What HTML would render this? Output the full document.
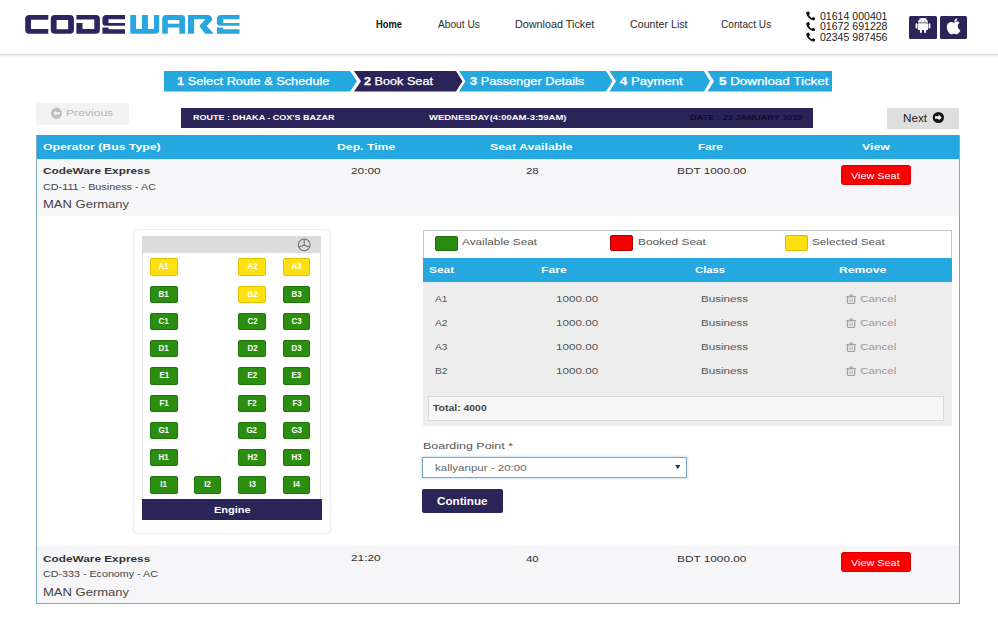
<!DOCTYPE html>
<html><head><meta charset="utf-8">
<style>
html,body{margin:0;padding:0;width:998px;height:639px;overflow:hidden;background:#fff;}
body{position:relative;font-family:"Liberation Sans",sans-serif;}
.t{position:absolute;white-space:nowrap;line-height:1;transform-origin:0 0;}
.r{position:absolute;}
.seat{position:absolute;width:27.5px;height:17.3px;box-sizing:border-box;border:1px solid;border-radius:2px;color:#fff;font-weight:bold;font-size:8.6px;line-height:14.6px;text-align:center;}
.seat span{display:inline-block;transform:scaleX(.92);}
svg{position:absolute;}
</style></head><body>
<div class="r" style="left:0px;top:53.5px;width:998px;height:1.5px;background:#d4d4d4;"></div>
<div class="r" style="left:0px;top:55px;width:998px;height:3px;background:linear-gradient(#ececec,#ffffff);"></div>
<svg style="left:0;top:0" width="260" height="50"><path fill="#2c2560" fill-rule="evenodd" d="M48.3,15 H29.2 Q25.2,15 25.2,19 V29.8 Q25.2,33.8 29.2,33.8 H48.3 V29.1 H31 V19.7 H48.3 Z M54.8,15 H69.9 Q73.9,15 73.9,19 V29.8 Q73.9,33.8 69.9,33.8 H54.8 Q50.8,33.8 50.8,29.8 V19 Q50.8,15 54.8,15 Z M56.6,19.9 V29.3 H68.1 V19.9 Z M76.4,15 H95.9 Q99.9,15 99.9,19 V29.8 Q99.9,33.8 95.9,33.8 H76.4 V22.9 H82.5 V29.1 H94.3 V19.5 H76.4 Z M125,15 H106.4 Q102.4,15 102.4,19 V22.7 Q102.4,25.7 105.4,25.7 H125 V22.9 H108.5 V19.3 H125 Z M102.4,27.4 H108.5 V29.3 H125 V33.8 H102.4 Z"/><path fill="#2aa6df" fill-rule="evenodd" d="M130.3,15 H136.1 V29.1 H141.9 V15 H147.9 V29.1 H153.9 V15 H159.2 V29.8 Q159.2,33.8 155.2,33.8 H130.3 Z M162.2,33.8 V19 Q162.2,15 166.2,15 H181.6 Q185.1,15 185.1,18.5 V33.8 H179.3 V27.4 H167.8 V33.8 Z M167.8,19.9 V23.8 H179.3 V19.9 Z M188,33.8 V15 H207.3 Q212.3,15 212.3,20 L206.6,25.9 L213.8,33.8 H205 L199.3,25.7 L205.6,19.3 H194.1 V33.8 Z M239.5,15 H220.9 Q216.9,15 216.9,19 V22.7 Q216.9,25.7 219.9,25.7 H239.5 V22.9 H223.0 V19.3 H239.5 Z M216.9,27.4 H223.0 V29.3 H239.5 V33.8 H216.9 Z"/></svg>
<div class="t" style="left:376.46px;top:19.79px;font-size:10.36px;color:#111;font-weight:bold;transform:scaleX(0.903);">Home</div>
<div class="t" style="left:437.69px;top:19.79px;font-size:10.36px;color:#2b2b2b;transform:scaleX(0.982);">About Us</div>
<div class="t" style="left:515.38px;top:19.79px;font-size:10.36px;color:#2b2b2b;transform:scaleX(1.043);">Download Ticket</div>
<div class="t" style="left:629.69px;top:19.79px;font-size:10.36px;color:#2b2b2b;transform:scaleX(1.031);">Counter List</div>
<div class="t" style="left:721.38px;top:19.79px;font-size:10.36px;color:#2b2b2b;transform:scaleX(0.980);">Contact Us</div>
<div class="t" style="left:819.50px;top:10.67px;font-size:10.51px;color:#222;transform:scaleX(1.005);">01614 000401</div>
<div class="t" style="left:819.50px;top:21.47px;font-size:10.51px;color:#222;transform:scaleX(1.005);">01672 691228</div>
<div class="t" style="left:819.50px;top:31.97px;font-size:10.51px;color:#222;transform:scaleX(1.005);">02345 987456</div>
<svg style="left:0;top:0" width="998" height="50"><path transform="translate(806,11.2)" d="M1.2,0.6 L3,0.2 L4,2.6 L2.9,3.6 C3.5,5 4.6,6.2 6,6.9 L7,5.8 L9.2,6.8 L8.8,8.6 C8.4,9.2 7.6,9.3 6.8,9.1 C3.6,8.2 1.2,5.6 0.3,2.6 C0.1,1.8 0.4,1 1.2,0.6 Z" fill="#111"/><path transform="translate(806,21.9)" d="M1.2,0.6 L3,0.2 L4,2.6 L2.9,3.6 C3.5,5 4.6,6.2 6,6.9 L7,5.8 L9.2,6.8 L8.8,8.6 C8.4,9.2 7.6,9.3 6.8,9.1 C3.6,8.2 1.2,5.6 0.3,2.6 C0.1,1.8 0.4,1 1.2,0.6 Z" fill="#111"/><path transform="translate(806,32.4)" d="M1.2,0.6 L3,0.2 L4,2.6 L2.9,3.6 C3.5,5 4.6,6.2 6,6.9 L7,5.8 L9.2,6.8 L8.8,8.6 C8.4,9.2 7.6,9.3 6.8,9.1 C3.6,8.2 1.2,5.6 0.3,2.6 C0.1,1.8 0.4,1 1.2,0.6 Z" fill="#111"/></svg>
<div class="r" style="left:909px;top:16px;width:28px;height:22.5px;background:#2b2459;border-radius:1.5px;"></div>
<div class="r" style="left:940px;top:16px;width:27px;height:22.5px;background:#2b2459;border-radius:1.5px;"></div>
<svg style="left:0;top:0" width="998" height="50"><g fill="#fff">
<path d="M917.9,22.5 A5.1,4.4 0 0 1 928.1,22.5 Z"/>
<rect x="917.9" y="23.2" width="10.2" height="6.7" rx="0.9"/>
<rect x="915.6" y="23.2" width="1.8" height="5.4" rx="0.9"/>
<rect x="928.6" y="23.2" width="1.8" height="5.4" rx="0.9"/>
<rect x="919.9" y="29" width="2" height="3.9" rx="1"/>
<rect x="924.1" y="29" width="2" height="3.9" rx="1"/>
<line x1="919.6" y1="17.6" x2="920.7" y2="19.2" stroke="#fff" stroke-width="0.6"/>
<line x1="926.4" y1="17.6" x2="925.3" y2="19.2" stroke="#fff" stroke-width="0.6"/>
</g><circle cx="921.1" cy="20.9" r="0.5" fill="#2b2459"/><circle cx="924.9" cy="20.9" r="0.5" fill="#2b2459"/><g fill="#fff" transform="translate(954.2,26.6) scale(1.13) translate(-954.2,-26)">
<path d="M954.2,22.6 C952.6,21.6 950.6,21.7 949.4,22.6 C947.6,23.9 947.2,26.4 948.1,28.7 C948.9,30.8 950.3,32.8 951.7,32.8 C952.6,32.8 953,32.3 954,32.3 C955,32.3 955.4,32.8 956.3,32.8 C957.7,32.8 959,30.9 959.7,29.2 C958.2,28.5 957.4,27.1 957.4,25.6 C957.4,24.3 958.1,23.3 959.1,22.7 C958.1,21.5 956.6,21.4 955.6,21.8 C955,22 954.6,22.4 954.2,22.6 Z"/>
<path d="M954.3,21.7 C954.1,20.1 955.3,18.7 956.9,18.5 C957.1,20.1 955.8,21.6 954.3,21.7 Z"/>
</g></svg>
<svg style="left:0;top:0" width="998" height="100">
<polygon fill="#25a8e0" points="164,71 350,71 357,81.25 350,91.5 164,91.5"/>
<polygon fill="#2b2459" points="354,71 456,71 462.5,81.25 456,91.5 354,91.5 361,81.25"/>
<polygon fill="#25a8e0" points="459,71 606,71 612.5,81.25 606,91.5 459,91.5 465.5,81.25"/>
<polygon fill="#25a8e0" points="609.5,71 704,71 710,81.25 704,91.5 609.5,91.5 616,81.25"/>
<polygon fill="#25a8e0" points="707.5,71 832,71 832,91.5 707.5,91.5 714,81.25"/>
</svg>
<div class="t" style="left:177.42px;top:76.74px;font-size:10.07px;color:#fff;transform:scaleX(1.267);-webkit-text-stroke:0.25px #fff;"><b>1</b> Select Route &amp; Schedule</div>
<div class="t" style="left:364.46px;top:76.74px;font-size:10.07px;color:#fff;transform:scaleX(1.257);-webkit-text-stroke:0.25px #fff;"><b>2</b> Book Seat</div>
<div class="t" style="left:470.00px;top:76.74px;font-size:10.07px;color:#fff;transform:scaleX(1.268);-webkit-text-stroke:0.25px #fff;"><b>3</b> Passenger Details</div>
<div class="t" style="left:620.31px;top:76.74px;font-size:10.07px;color:#fff;transform:scaleX(1.304);-webkit-text-stroke:0.25px #fff;"><b>4</b> Payment</div>
<div class="t" style="left:718.62px;top:76.74px;font-size:10.07px;color:#fff;transform:scaleX(1.331);-webkit-text-stroke:0.25px #fff;"><b>5</b> Download Ticket</div>
<div class="r" style="left:36px;top:102.5px;width:93px;height:22.5px;background:#f3f3f3;"></div>
<svg style="left:0;top:0" width="140" height="140"><circle cx="56.5" cy="113.3" r="5.5" fill="#bdbdbd"/>
<path d="M53.2,113.3 L56.2,110.6 V112.2 H59.8 V114.4 H56.2 V116 Z" fill="#f3f3f3"/></svg>
<div class="t" style="left:65.76px;top:108.01px;font-size:9.64px;color:#b5b5b5;transform:scaleX(1.260);">Previous</div>
<div class="r" style="left:181px;top:108px;width:632px;height:19.5px;background:#2b2459;"></div>
<div class="t" style="left:193.38px;top:113.78px;font-size:7.90px;color:#fff;font-weight:bold;transform:scaleX(1.143);">ROUTE : DHAKA - COX'S BAZAR</div>
<div class="t" style="left:429.08px;top:113.78px;font-size:7.90px;color:#fff;font-weight:bold;transform:scaleX(1.200);">WEDNESDAY(4:00AM-3:59AM)</div>
<div class="t" style="left:689.80px;top:113.68px;font-size:7.90px;color:#110d28;font-weight:bold;transform:scaleX(1.170);">DATE : 23 JANUARY 2019</div>
<div class="r" style="left:887px;top:108px;width:72px;height:20.5px;background:#dedede;"></div>
<div class="t" style="left:903.46px;top:114.14px;font-size:10.36px;color:#222;transform:scaleX(1.130);">Next</div>
<svg style="left:880px;top:100px" width="80" height="40"><circle cx="58.4" cy="17.5" r="5.6" fill="#111"/>
<path d="M61.8,17.5 L58.6,14.6 V16.3 H55 V18.7 H58.6 V20.4 Z" fill="#fff"/></svg>
<div class="r" style="left:36px;top:134.5px;width:924px;height:469.5px;background:#fff;box-sizing:border-box;border:1px solid #80abbd;"></div>
<div class="r" style="left:37px;top:134.5px;width:922px;height:24.0px;background:#25a8e0;"></div>
<div class="r" style="left:37px;top:158.5px;width:922px;height:57.099999999999994px;background:#f6f6f8;"></div>
<div class="r" style="left:37px;top:546.3px;width:922px;height:56.700000000000045px;background:#f6f6f8;"></div>
<div class="t" style="left:43.00px;top:142.46px;font-size:9.93px;color:#fff;font-weight:bold;transform:scaleX(1.236);">Operator (Bus Type)</div>
<div class="t" style="left:337.00px;top:142.46px;font-size:9.93px;color:#fff;font-weight:bold;transform:scaleX(1.233);">Dep. Time</div>
<div class="t" style="left:490.38px;top:142.46px;font-size:9.93px;color:#fff;font-weight:bold;transform:scaleX(1.240);">Seat Available</div>
<div class="t" style="left:697.69px;top:142.46px;font-size:9.93px;color:#fff;font-weight:bold;transform:scaleX(1.182);">Fare</div>
<div class="t" style="left:862.23px;top:142.46px;font-size:9.93px;color:#fff;font-weight:bold;transform:scaleX(1.240);">View</div>
<div class="t" style="left:43.00px;top:166.01px;font-size:9.64px;color:#333;font-weight:bold;transform:scaleX(1.227);">CodeWare Express</div>
<div class="t" style="left:43.00px;top:183.39px;font-size:8.77px;color:#444;transform:scaleX(1.231);">CD-111 - Business - AC</div>
<div class="t" style="left:43.00px;top:200.19px;font-size:10.07px;color:#444;transform:scaleX(1.293);">MAN Germany</div>
<div class="t" style="left:351.00px;top:165.51px;font-size:9.64px;color:#333;transform:scaleX(1.234);">20:00</div>
<div class="t" style="left:526.23px;top:166.11px;font-size:9.64px;color:#333;transform:scaleX(1.184);">28</div>
<div class="t" style="left:676.62px;top:166.11px;font-size:9.64px;color:#333;transform:scaleX(1.228);">BDT 1000.00</div>
<div class="r" style="left:841.2px;top:164.5px;width:69.5px;height:20.400000000000006px;background:#fa0000;border-radius:2.5px;box-sizing:border-box;border:1px solid #dc0000;"></div>
<div class="t" style="left:851.00px;top:170.51px;font-size:9.64px;color:#fff;transform:scaleX(1.127);">View Seat</div>
<div class="t" style="left:43.00px;top:553.81px;font-size:9.64px;color:#333;font-weight:bold;transform:scaleX(1.227);">CodeWare Express</div>
<div class="t" style="left:43.00px;top:570.39px;font-size:8.77px;color:#444;transform:scaleX(1.222);">CD-333 - Economy - AC</div>
<div class="t" style="left:43.00px;top:587.99px;font-size:10.07px;color:#444;transform:scaleX(1.293);">MAN Germany</div>
<div class="t" style="left:351.00px;top:553.31px;font-size:9.64px;color:#333;transform:scaleX(1.234);">21:20</div>
<div class="t" style="left:526.23px;top:553.91px;font-size:9.64px;color:#333;transform:scaleX(1.184);">40</div>
<div class="t" style="left:676.62px;top:553.91px;font-size:9.64px;color:#333;transform:scaleX(1.228);">BDT 1000.00</div>
<div class="r" style="left:841.2px;top:551.9px;width:69.5px;height:20.399999999999977px;background:#fa0000;border-radius:2.5px;box-sizing:border-box;border:1px solid #dc0000;"></div>
<div class="t" style="left:851.00px;top:557.91px;font-size:9.64px;color:#fff;transform:scaleX(1.127);">View Seat</div>
<div class="r" style="left:133.7px;top:229.5px;width:196.0px;height:303.5px;background:#fff;border-radius:4px;box-shadow:0 0 2px rgba(0,0,0,.25);"></div>
<div class="r" style="left:142.4px;top:236px;width:179.1px;height:17px;background:#dcdcdc;"></div>
<div class="r" style="left:142.4px;top:253px;width:179.1px;height:246.39999999999998px;background:#fff;box-sizing:border-box;border-left:1px solid #e2e2e2;border-right:1px solid #e2e2e2;"></div>
<svg style="left:290px;top:230px" width="30" height="30"><g fill="none" stroke="#6e6e6e" stroke-width="1.05"><circle cx="14.2" cy="14.8" r="5.9"/>
<path d="M8.6,17 L14.2,15.2 L19.8,17"/><path d="M14.2,9 V15.2"/></g></svg>
<div class="r" style="left:142.3px;top:499.4px;width:179.7px;height:20.399999999999977px;background:#2b2459;"></div>
<div class="t" style="left:214.00px;top:504.51px;font-size:9.64px;color:#fff;font-weight:bold;transform:scaleX(1.143);">Engine</div>
<div class="seat" style="left:150.2px;top:258.30px;background:#ffe010;border-color:#e0c200"><span>A1</span></div>
<div class="seat" style="left:238.4px;top:258.30px;background:#ffe010;border-color:#e0c200"><span>A2</span></div>
<div class="seat" style="left:282.9px;top:258.30px;background:#ffe010;border-color:#e0c200"><span>A3</span></div>
<div class="seat" style="left:150.2px;top:285.55px;background:#2c8e11;border-color:#207409"><span>B1</span></div>
<div class="seat" style="left:238.4px;top:285.55px;background:#ffe010;border-color:#e0c200"><span>B2</span></div>
<div class="seat" style="left:282.9px;top:285.55px;background:#2c8e11;border-color:#207409"><span>B3</span></div>
<div class="seat" style="left:150.2px;top:312.80px;background:#2c8e11;border-color:#207409"><span>C1</span></div>
<div class="seat" style="left:238.4px;top:312.80px;background:#2c8e11;border-color:#207409"><span>C2</span></div>
<div class="seat" style="left:282.9px;top:312.80px;background:#2c8e11;border-color:#207409"><span>C3</span></div>
<div class="seat" style="left:150.2px;top:340.05px;background:#2c8e11;border-color:#207409"><span>D1</span></div>
<div class="seat" style="left:238.4px;top:340.05px;background:#2c8e11;border-color:#207409"><span>D2</span></div>
<div class="seat" style="left:282.9px;top:340.05px;background:#2c8e11;border-color:#207409"><span>D3</span></div>
<div class="seat" style="left:150.2px;top:367.30px;background:#2c8e11;border-color:#207409"><span>E1</span></div>
<div class="seat" style="left:238.4px;top:367.30px;background:#2c8e11;border-color:#207409"><span>E2</span></div>
<div class="seat" style="left:282.9px;top:367.30px;background:#2c8e11;border-color:#207409"><span>E3</span></div>
<div class="seat" style="left:150.2px;top:394.55px;background:#2c8e11;border-color:#207409"><span>F1</span></div>
<div class="seat" style="left:238.4px;top:394.55px;background:#2c8e11;border-color:#207409"><span>F2</span></div>
<div class="seat" style="left:282.9px;top:394.55px;background:#2c8e11;border-color:#207409"><span>F3</span></div>
<div class="seat" style="left:150.2px;top:421.80px;background:#2c8e11;border-color:#207409"><span>G1</span></div>
<div class="seat" style="left:238.4px;top:421.80px;background:#2c8e11;border-color:#207409"><span>G2</span></div>
<div class="seat" style="left:282.9px;top:421.80px;background:#2c8e11;border-color:#207409"><span>G3</span></div>
<div class="seat" style="left:150.2px;top:449.05px;background:#2c8e11;border-color:#207409"><span>H1</span></div>
<div class="seat" style="left:238.4px;top:449.05px;background:#2c8e11;border-color:#207409"><span>H2</span></div>
<div class="seat" style="left:282.9px;top:449.05px;background:#2c8e11;border-color:#207409"><span>H3</span></div>
<div class="seat" style="left:150.2px;top:476.30px;background:#2c8e11;border-color:#207409"><span>I1</span></div>
<div class="seat" style="left:193.8px;top:476.30px;background:#2c8e11;border-color:#207409"><span>I2</span></div>
<div class="seat" style="left:238.4px;top:476.30px;background:#2c8e11;border-color:#207409"><span>I3</span></div>
<div class="seat" style="left:282.9px;top:476.30px;background:#2c8e11;border-color:#207409"><span>I4</span></div>
<div class="r" style="left:422.5px;top:229.5px;width:529.0px;height:196.5px;background:#fff;box-sizing:border-box;border:1px solid #c4c9c9;border-bottom:none;"></div>
<div class="r" style="left:422.5px;top:258px;width:529.0px;height:23.600000000000023px;background:#25a8e0;"></div>
<div class="r" style="left:422.5px;top:281.6px;width:529.0px;height:144.39999999999998px;background:#ededed;"></div>
<div class="r" style="left:435px;top:235.5px;width:23px;height:15.0px;background:#2a8a0f;border-radius:2px;box-sizing:border-box;border:1px solid #1f6f0a;"></div>
<div class="t" style="left:462.46px;top:237.01px;font-size:9.64px;color:#555;transform:scaleX(1.223);">Available Seat</div>
<div class="r" style="left:610px;top:235.2px;width:23px;height:15.400000000000006px;background:#f40000;border-radius:2px;box-sizing:border-box;border:1px solid #b00000;"></div>
<div class="t" style="left:637.69px;top:237.01px;font-size:9.64px;color:#555;transform:scaleX(1.231);">Booked Seat</div>
<div class="r" style="left:784.6px;top:235.2px;width:23.399999999999977px;height:15.400000000000006px;background:#ffe010;border-radius:2px;box-sizing:border-box;border:1px solid #d8b800;"></div>
<div class="t" style="left:811.77px;top:237.01px;font-size:9.64px;color:#555;transform:scaleX(1.215);">Selected Seat</div>
<div class="t" style="left:428.54px;top:265.48px;font-size:9.78px;color:#fff;font-weight:bold;transform:scaleX(1.218);">Seat</div>
<div class="t" style="left:540.62px;top:265.48px;font-size:9.78px;color:#fff;font-weight:bold;transform:scaleX(1.245);">Fare</div>
<div class="t" style="left:694.54px;top:265.48px;font-size:9.78px;color:#fff;font-weight:bold;transform:scaleX(1.155);">Class</div>
<div class="t" style="left:838.62px;top:265.48px;font-size:9.78px;color:#fff;font-weight:bold;transform:scaleX(1.246);">Remove</div>
<div class="t" style="left:435.00px;top:294.46px;font-size:9.93px;color:#555;transform:scaleX(1.029);">A1</div>
<div class="t" style="left:556.23px;top:294.46px;font-size:9.93px;color:#555;transform:scaleX(1.175);">1000.00</div>
<div class="t" style="left:700.54px;top:294.46px;font-size:9.93px;color:#555;transform:scaleX(1.170);">Business</div>
<div class="t" style="left:859.62px;top:294.46px;font-size:9.93px;color:#999;transform:scaleX(1.180);">Cancel</div>
<svg style="left:845px;top:294.00px" width="13" height="12"><g fill="none" stroke="#9c9c9c">
<path d="M4.4,2.3 Q4.4,0.7 6.1,0.7 Q7.8,0.7 7.8,2.3" stroke-width="1.1"/><path d="M1.4,2.7 H10.8" stroke-width="1.3"/>
<path d="M2.5,3.4 V8.4 Q2.5,9.5 3.6,9.5 H8.6 Q9.7,9.5 9.7,8.4 V3.4" stroke-width="1.2"/>
<path d="M5,4.6 V8 M7.2,4.6 V8" stroke-width="0.9"/></g></svg>
<div class="t" style="left:435.00px;top:318.36px;font-size:9.93px;color:#555;transform:scaleX(1.029);">A2</div>
<div class="t" style="left:556.23px;top:318.36px;font-size:9.93px;color:#555;transform:scaleX(1.175);">1000.00</div>
<div class="t" style="left:700.54px;top:318.36px;font-size:9.93px;color:#555;transform:scaleX(1.170);">Business</div>
<div class="t" style="left:859.62px;top:318.36px;font-size:9.93px;color:#999;transform:scaleX(1.180);">Cancel</div>
<svg style="left:845px;top:317.90px" width="13" height="12"><g fill="none" stroke="#9c9c9c">
<path d="M4.4,2.3 Q4.4,0.7 6.1,0.7 Q7.8,0.7 7.8,2.3" stroke-width="1.1"/><path d="M1.4,2.7 H10.8" stroke-width="1.3"/>
<path d="M2.5,3.4 V8.4 Q2.5,9.5 3.6,9.5 H8.6 Q9.7,9.5 9.7,8.4 V3.4" stroke-width="1.2"/>
<path d="M5,4.6 V8 M7.2,4.6 V8" stroke-width="0.9"/></g></svg>
<div class="t" style="left:435.00px;top:342.26px;font-size:9.93px;color:#555;transform:scaleX(1.029);">A3</div>
<div class="t" style="left:556.23px;top:342.26px;font-size:9.93px;color:#555;transform:scaleX(1.175);">1000.00</div>
<div class="t" style="left:700.54px;top:342.26px;font-size:9.93px;color:#555;transform:scaleX(1.170);">Business</div>
<div class="t" style="left:859.62px;top:342.26px;font-size:9.93px;color:#999;transform:scaleX(1.180);">Cancel</div>
<svg style="left:845px;top:341.80px" width="13" height="12"><g fill="none" stroke="#9c9c9c">
<path d="M4.4,2.3 Q4.4,0.7 6.1,0.7 Q7.8,0.7 7.8,2.3" stroke-width="1.1"/><path d="M1.4,2.7 H10.8" stroke-width="1.3"/>
<path d="M2.5,3.4 V8.4 Q2.5,9.5 3.6,9.5 H8.6 Q9.7,9.5 9.7,8.4 V3.4" stroke-width="1.2"/>
<path d="M5,4.6 V8 M7.2,4.6 V8" stroke-width="0.9"/></g></svg>
<div class="t" style="left:435.00px;top:366.16px;font-size:9.93px;color:#555;transform:scaleX(1.029);">B2</div>
<div class="t" style="left:556.23px;top:366.16px;font-size:9.93px;color:#555;transform:scaleX(1.175);">1000.00</div>
<div class="t" style="left:700.54px;top:366.16px;font-size:9.93px;color:#555;transform:scaleX(1.170);">Business</div>
<div class="t" style="left:859.62px;top:366.16px;font-size:9.93px;color:#999;transform:scaleX(1.180);">Cancel</div>
<svg style="left:845px;top:365.70px" width="13" height="12"><g fill="none" stroke="#9c9c9c">
<path d="M4.4,2.3 Q4.4,0.7 6.1,0.7 Q7.8,0.7 7.8,2.3" stroke-width="1.1"/><path d="M1.4,2.7 H10.8" stroke-width="1.3"/>
<path d="M2.5,3.4 V8.4 Q2.5,9.5 3.6,9.5 H8.6 Q9.7,9.5 9.7,8.4 V3.4" stroke-width="1.2"/>
<path d="M5,4.6 V8 M7.2,4.6 V8" stroke-width="0.9"/></g></svg>
<div class="r" style="left:428.2px;top:396.2px;width:516.2px;height:25.0px;background:#f7f7f7;box-sizing:border-box;border:1px solid #dadada;"></div>
<div class="t" style="left:433.46px;top:405.48px;font-size:8.19px;color:#444;font-weight:bold;transform:scaleX(1.276);">Total: 4000</div>
<div class="t" style="left:422.77px;top:441.55px;font-size:9.35px;color:#555;transform:scaleX(1.334);">Boarding Point *</div>
<div class="r" style="left:422.3px;top:456.8px;width:264.3px;height:21.5px;background:#fff;box-sizing:border-box;border:1px solid #7ea6c4;box-shadow:0 0 3px rgba(102,175,233,.5);"></div>
<div class="t" style="left:435.46px;top:463.21px;font-size:9.93px;color:#666;transform:scaleX(1.162);">kallyanpur - 20:00</div>
<svg style="left:670px;top:460px" width="16" height="14"><path d="M5.2,5 H10.4 L7.8,9.2 Z" fill="#333"/></svg>
<div class="r" style="left:422.3px;top:488.9px;width:81.19999999999999px;height:23.899999999999977px;background:#2b2459;border-radius:2px;"></div>
<div class="t" style="left:437.46px;top:497.19px;font-size:10.07px;color:#fff;font-weight:bold;transform:scaleX(1.158);">Continue</div>
</body></html>
